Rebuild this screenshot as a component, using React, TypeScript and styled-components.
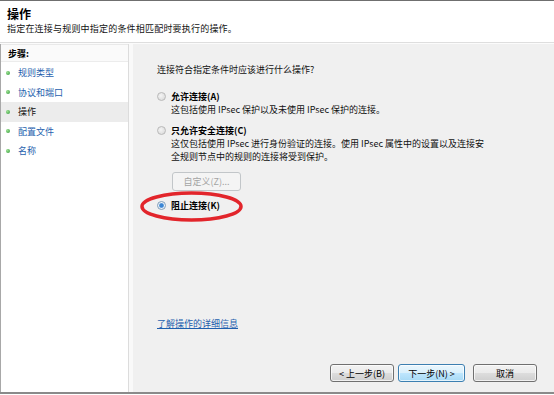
import styled, { createGlobalStyle } from 'styled-components';

const GlobalStyle = createGlobalStyle`
  html, body {
    margin: 0;
    padding: 0;
    background: #ffffff;
  }
  body {
    font-family: "Noto Sans CJK SC", "Noto Sans", sans-serif;
    color: #111111;
  }
`;

const StyledWindow = styled.div`
  width: 554px;
  height: 395px;
  box-sizing: border-box;
  border-top: 1px solid #6f6f6f;
  display: flex;
  flex-direction: column;
  overflow: hidden;
`;

const StyledHeader = styled.div`
  height: 42px;
  box-sizing: border-box;
  padding: 6px 7px 0;
  background: #ffffff;
  border-bottom: 1px solid #dedede;
  display: flex;
  flex-direction: column;
  gap: 2px;
`;

const StyledTitle = styled.div`
  font-size: 12px;
  line-height: 14px;
  font-weight: bold;
  color: #000;
`;

const StyledSubtitle = styled.div`
  font-size: 9px;
  line-height: 12px;
  letter-spacing: 0.2px;
  white-space: nowrap;
`;

const StyledBody = styled.div`
  flex: 1;
  display: flex;
  border-top: 1px solid #fbfbfb;
  border-bottom: 2px solid #8a8a8a;
  margin-bottom: 1px;
`;

const StyledSteps = styled.div`
  width: 127px;
  background: #ffffff;
  border-left: 1px solid #a8a8a8;
  display: flex;
  flex-direction: column;
`;

const StyledStepsHeader = styled.div`
  height: 18px;
  box-sizing: border-box;
  padding: 3px 0 0 7px;
  font-size: 9px;
  line-height: 12px;
  font-weight: bold;
  color: #000;
  background: #fafafa;
  border-top: 1px solid #e9e9e9;
  border-bottom: 1px solid #ececec;
`;

const StyledStepList = styled.ul`
  list-style: none;
  margin: 0;
  padding: 1px 0 0;
`;

const StyledStep = styled.li<{ $current?: boolean }>`
  height: 19.5px;
  display: flex;
  align-items: center;
  gap: 8px;
  padding-left: 5px;
  font-size: 9px;
  background: ${(p) => (p.$current ? '#ececec' : 'transparent')};
  color: ${(p) => (p.$current ? '#111' : '#1f5fae')};
`;

const StyledBullet = styled.span`
  width: 4px;
  height: 4px;
  border-radius: 50%;
  background: radial-gradient(circle at 35% 35%, #9be08f, #2f9a3a);
`;

const StyledSplitter = styled.div`
  width: 4px;
  border-left: 1px solid #dcdcdc;
  background: #f9f9f9;
`;

const StyledContent = styled.div`
  flex: 1;
  background: #f0f0f0;
  display: flex;
  flex-direction: column;
  padding: 20px 17px 10px 24px;
`;

const StyledQuestion = styled.div`
  font-size: 9px;
  line-height: 12px;
  margin-bottom: 14px;
`;

const StyledOption = styled.div`
  display: flex;
  flex-direction: column;
  gap: 1px;
  margin-bottom: 8px;
`;

const StyledOptionRow = styled.div`
  position: relative;
  display: flex;
  align-items: center;
  gap: 5px;
  height: 12px;
`;

const StyledRadio = styled.span<{ $checked?: boolean }>`
  width: 9px;
  height: 9px;
  box-sizing: border-box;
  border-radius: 50%;
  border: 1px solid ${(p) => (p.$checked ? '#7f9db9' : '#b9b9b9')};
  background: ${(p) =>
    p.$checked
      ? 'radial-gradient(circle, #3b86d4 0 1.8px, #9fc3e8 2.4px, #eef3f8 3px)'
      : 'radial-gradient(circle at 40% 40%, #f4f4f4, #d6d6d6)'};
`;

const StyledOptionLabel = styled.span`
  font-size: 9px;
  font-weight: bold;
  color: #000;
  white-space: nowrap;
`;

const StyledDescription = styled.div`
  margin-left: 14px;
  font-size: 9px;
  line-height: 13px;
  white-space: nowrap;
`;

const StyledCustomButton = styled.button`
  align-self: flex-start;
  margin: 1px 0 8px 15px;
  width: 69px;
  height: 19px;
  padding: 0;
  border: 1px solid #c2c6c9;
  border-radius: 3px;
  background: #f4f4f4;
  color: #a3a3a3;
  font-family: inherit;
  font-size: 9px;
`;

const StyledHighlight = styled.svg`
  position: absolute;
  left: -17px;
  top: -8px;
  width: 103px;
  height: 31px;
  pointer-events: none;
`;

const StyledLink = styled.a`
  margin-top: auto;
  margin-bottom: 34px;
  align-self: flex-start;
  font-size: 9px;
  line-height: 12px;
  color: #1f5fae;
  text-decoration: underline;
`;

const StyledFooter = styled.div`
  display: flex;
  justify-content: flex-end;
  align-items: center;
  gap: 4px;
`;

const StyledButton = styled.button<{ $focused?: boolean; $spaced?: boolean }>`
  width: 64px;
  height: 18px;
  padding: 0;
  margin-left: ${(p) => (p.$spaced ? '4px' : '0')};
  border: 1px solid ${(p) => (p.$focused ? '#3c7fb1' : '#707070')};
  border-radius: 3px;
  background: ${(p) =>
    p.$focused
      ? 'linear-gradient(#eaf6fd 0%, #d9f0fc 50%, #bee6fd 51%, #a7d9f5 100%)'
      : 'linear-gradient(#f2f2f2 0%, #ebebeb 50%, #dddddd 51%, #cfcfcf 100%)'};
  box-shadow: inset 0 0 0 1px rgba(255, 255, 255, 0.7);
  font-family: inherit;
  font-size: 9px;
  color: #000;
  white-space: nowrap;
`;

const steps = ['规则类型', '协议和端口', '操作', '配置文件', '名称'];

export default function App() {
  return (
    <>
      <GlobalStyle />
      <StyledWindow>
        <StyledHeader>
          <StyledTitle>操作</StyledTitle>
          <StyledSubtitle>指定在连接与规则中指定的条件相匹配时要执行的操作。</StyledSubtitle>
        </StyledHeader>
        <StyledBody>
          <StyledSteps>
            <StyledStepsHeader>步骤:</StyledStepsHeader>
            <StyledStepList>
              {steps.map((s) => (
                <StyledStep key={s} $current={s === '操作'}>
                  <StyledBullet />
                  {s}
                </StyledStep>
              ))}
            </StyledStepList>
          </StyledSteps>
          <StyledSplitter />
          <StyledContent>
            <StyledQuestion>连接符合指定条件时应该进行什么操作?</StyledQuestion>

            <StyledOption>
              <StyledOptionRow>
                <StyledRadio />
                <StyledOptionLabel>允许连接(A)</StyledOptionLabel>
              </StyledOptionRow>
              <StyledDescription>这包括使用 IPsec 保护以及未使用 IPsec 保护的连接。</StyledDescription>
            </StyledOption>

            <StyledOption>
              <StyledOptionRow>
                <StyledRadio />
                <StyledOptionLabel>只允许安全连接(C)</StyledOptionLabel>
              </StyledOptionRow>
              <StyledDescription>
                这仅包括使用 IPsec 进行身份验证的连接。使用 IPsec 属性中的设置以及连接安
                <br />
                全规则节点中的规则的连接将受到保护。
              </StyledDescription>
            </StyledOption>

            <StyledCustomButton disabled>自定义(Z)...</StyledCustomButton>

            <StyledOptionRow>
              <StyledRadio $checked />
              <StyledOptionLabel>阻止连接(K)</StyledOptionLabel>
              <StyledHighlight viewBox="0 0 103 31">
                <ellipse
                  cx="51.5"
                  cy="15.5"
                  rx="49.5"
                  ry="13.5"
                  fill="none"
                  stroke="#e2252b"
                  strokeWidth="3.5"
                />
              </StyledHighlight>
            </StyledOptionRow>

            <StyledLink href="#">了解操作的详细信息</StyledLink>

            <StyledFooter>
              <StyledButton>&lt; 上一步(B)</StyledButton>
              <StyledButton $focused style={{ width: 67 }}>
                下一步(N) &gt;
              </StyledButton>
              <StyledButton $spaced>取消</StyledButton>
            </StyledFooter>
          </StyledContent>
        </StyledBody>
      </StyledWindow>
    </>
  );
}
